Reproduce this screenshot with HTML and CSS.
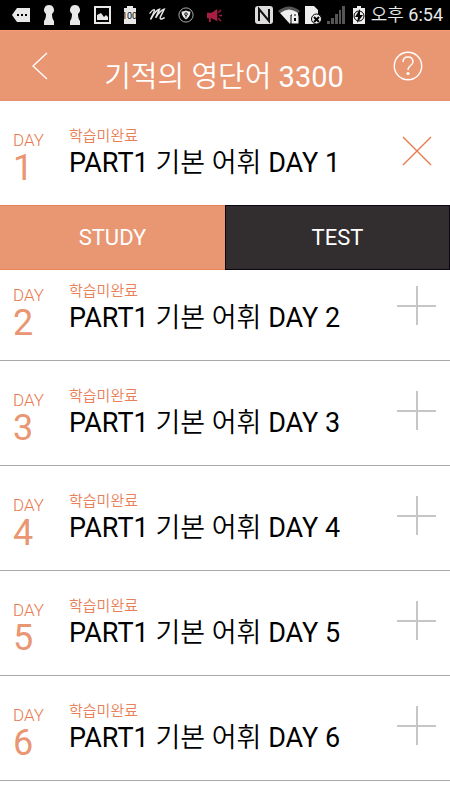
FILE: index.html
```html
<!DOCTYPE html>
<html lang="ko">
<head>
    <meta charset="UTF-8">
    <meta name="viewport" content="width=device-width, initial-scale=1.0">
    <title>기적의 영단어 3300</title>
    <link rel="stylesheet" href="styles.css">
</head>
<body>
    <!-- 상태 표시줄 -->
    <div class="status-bar">
        <div class="status-left">
            <svg width="18" height="16" viewBox="0 0 18 16"><path fill="#e8e8e8" d="M5 1h13v14H5L0 8z"/><path fill="#000" d="M5 7h2v2H5zM9 7h2v2H9zM13 7h2v2h-2z"/></svg>
            <svg width="14" height="20" viewBox="0 0 14 20"><path fill="#e8e8e8" d="M7 0a5 5 0 0 1 3 9q0 5 2 7v4H2v-4q2-2 2-7A5 5 0 0 1 7 0z"/></svg>
            <svg width="14" height="20" viewBox="0 0 14 20"><path fill="#e8e8e8" d="M7 0a5 5 0 0 1 3 9q0 5 2 7v4H2v-4q2-2 2-7A5 5 0 0 1 7 0z"/></svg>
            <svg width="17" height="18" viewBox="0 0 17 18"><path fill="none" stroke="#e8e8e8" stroke-width="2" d="M1 1h15v16H1z"/><path fill="#e8e8e8" d="M3 14V9l4-2 3 4 2-2 2 2v3z"/></svg>
            <span class="battery-level">
                <svg width="14" height="18" viewBox="0 0 14 18"><path fill="#e8e8e8" d="M4 0h6v2h3v16H1V2h3z"/></svg>
                <span class="battery-text">100</span>
            </span>
            <svg width="17" height="16" viewBox="0 0 18 16"><path fill="none" stroke="#e8e8e8" stroke-width="1.4" stroke-linecap="round" d="M1 6Q5 1 6 3L2 12"/><path fill="none" stroke="#e8e8e8" stroke-width="1.6" stroke-linecap="round" d="M2 12Q7 3 11 2L7 11Q12 3 16 2L12 10Q11 14 16 11"/></svg>
            <svg width="16" height="16" viewBox="0 0 18 18"><circle cx="9" cy="9" r="8" fill="none" stroke="#bbb"/><path fill="#e8e8e8" d="M9 4q2 1 5 1 0 6-5 9-5-3-5-9 3 0 5-1z"/><circle cx="9" cy="8" r="1.5" fill="none" stroke="#000"/><path stroke="#000" d="M9 9v3"/></svg>
            <svg width="17" height="15" viewBox="0 0 18 16"><path fill="#a81d43" d="M1 5h5l6-4v13l-6-3H5v4H3v-4H1z"/><path stroke="#a81d43" stroke-width="1.5" d="M13 5l3-3M14 8h3M13 11l3 3"/></svg>
        </div>
        <div class="status-right">
            <svg width="18" height="18" viewBox="0 0 18 18"><rect width="18" height="18" rx="3" fill="#ddd"/><path fill="none" stroke="#111" stroke-width="2" d="M4 15V3l10 12V3"/><path stroke="#ddd" d="M6 2l7 9M5 7l7 9"/></svg>
            <svg width="22" height="18" viewBox="0 0 22 18"><path fill="#555" d="M0 5q11-9 22 0l-2 2Q11 1 2 7z"/><path fill="#eee" d="M2 7q9-7 18 0l-8 11z"/><path fill="#eee" stroke="#000" d="M13 9h8v9h-8z"/><path fill="none" stroke="#eee" stroke-width="2" d="M15 10V8q2-3 4 0v2"/><path stroke="#000" stroke-width="2" d="M17 12v3"/></svg>
            <svg width="17" height="18" viewBox="0 0 17 18"><path fill="#eee" d="M0 0h9l4 4v14H0z"/><circle cx="11.5" cy="13" r="5" fill="#eee" stroke="#000"/><path stroke="#000" stroke-width="2" d="M9 11l5 5M14 11l-5 5"/></svg>
            <svg width="18" height="18" viewBox="0 0 18 18"><path fill="#555" d="M0 15h3v3H0zM4 12h3v6H4zM8 8h3v10H8zM12 4h2v14h-2zM15 0h3v18h-3z"/></svg>
            <svg width="16" height="18" viewBox="0 0 16 18"><path fill="#eee" d="M7 0h4v2h4v16H3V2h4z"/><circle cx="9" cy="10" r="5" fill="none" stroke="#000"/><path fill="#000" d="M10 3l-5 8h3l-1 6 6-8h-3z"/></svg>
            <span class="clock">오후 6:54</span>
        </div>
    </div>

    <!-- 상단 제목 -->
    <header class="header">
        <button class="icon-button back" type="button" aria-label="뒤로">
            <svg width="16" height="28" viewBox="0 0 16 28"><path fill="none" stroke="#fff" stroke-width="1.4" d="M15 1L1 14l14 13"/></svg>
        </button>
        <h1 class="title">기적의 영단어 3300</h1>
        <button class="icon-button" type="button" aria-label="도움말">
            <svg width="30" height="30" viewBox="0 0 30 30"><g fill="none" stroke="#fff" stroke-width="1.4"><circle cx="15" cy="15" r="13.7"/><path d="M10 11q0-5 5-5t5 5q0 2-3 4-2 2-2 4"/></g><circle cx="15" cy="22.500" r="1.600" fill="#fff"/></svg>
        </button>
    </header>

    <!-- 학습 목록 -->
    <main class="day-list">
        <section class="day-row open">
            <div class="day"><span class="day-label">DAY</span><span class="day-number">1</span></div>
            <div class="info"><span class="state">학습미완료</span><h2 class="name">PART1 기본 어휘 DAY 1</h2></div>
            <button class="toggle" type="button" aria-label="닫기"><svg width="40" height="40" viewBox="0 0 40 40"><path stroke="#e8794f" stroke-width="1.4" d="M6 6l28 28M34 6L6 34"/></svg></button>
        </section>
        <div class="actions">
            <button class="study" type="button">STUDY</button>
            <button class="test" type="button">TEST</button>
        </div>
        <section class="day-row">
            <div class="day"><span class="day-label">DAY</span><span class="day-number">2</span></div>
            <div class="info"><span class="state">학습미완료</span><h2 class="name">PART1 기본 어휘 DAY 2</h2></div>
            <button class="toggle" type="button" aria-label="열기"><svg width="40" height="40" viewBox="0 0 40 40"><path fill="#c6c6c6" d="M19 0h2v39h-2zM0 19h39v2H0z"/></svg></button>
        </section>
        <section class="day-row">
            <div class="day"><span class="day-label">DAY</span><span class="day-number">3</span></div>
            <div class="info"><span class="state">학습미완료</span><h2 class="name">PART1 기본 어휘 DAY 3</h2></div>
            <button class="toggle" type="button" aria-label="열기"><svg width="40" height="40" viewBox="0 0 40 40"><path fill="#c6c6c6" d="M19 0h2v39h-2zM0 19h39v2H0z"/></svg></button>
        </section>
        <section class="day-row">
            <div class="day"><span class="day-label">DAY</span><span class="day-number">4</span></div>
            <div class="info"><span class="state">학습미완료</span><h2 class="name">PART1 기본 어휘 DAY 4</h2></div>
            <button class="toggle" type="button" aria-label="열기"><svg width="40" height="40" viewBox="0 0 40 40"><path fill="#c6c6c6" d="M19 0h2v39h-2zM0 19h39v2H0z"/></svg></button>
        </section>
        <section class="day-row">
            <div class="day"><span class="day-label">DAY</span><span class="day-number">5</span></div>
            <div class="info"><span class="state">학습미완료</span><h2 class="name">PART1 기본 어휘 DAY 5</h2></div>
            <button class="toggle" type="button" aria-label="열기"><svg width="40" height="40" viewBox="0 0 40 40"><path fill="#c6c6c6" d="M19 0h2v39h-2zM0 19h39v2H0z"/></svg></button>
        </section>
        <section class="day-row">
            <div class="day"><span class="day-label">DAY</span><span class="day-number">6</span></div>
            <div class="info"><span class="state">학습미완료</span><h2 class="name">PART1 기본 어휘 DAY 6</h2></div>
            <button class="toggle" type="button" aria-label="열기"><svg width="40" height="40" viewBox="0 0 40 40"><path fill="#c6c6c6" d="M19 0h2v39h-2zM0 19h39v2H0z"/></svg></button>
        </section>
    </main>
</body>
</html>
```
FILE: styles.css
```css
/* 기본 스타일 */
* {
    box-sizing: border-box;
}
body {
    margin: 0;
    background: #fff;
    color: #000;
    font-family: Roboto, "Noto Sans CJK KR DemiLight", "Noto Sans CJK KR", sans-serif;
}
button {
    padding: 0;
    border: 0;
    background: none;
    font-family: inherit;
    cursor: pointer;
}
svg {
    display: block;
    flex: none;
}
/* 상태 표시줄 */
.status-bar {
    display: flex;
    justify-content: space-between;
    align-items: center;
    height: 30px;
    padding: 0 7px 0 12px;
    background: #000;
    color: #e8e8e8;
}
.status-left {
    display: flex;
    align-items: center;
    gap: 12px;
}
.status-right {
    display: flex;
    align-items: center;
    gap: 5px;
}
.battery-level {
    position: relative;
}
.battery-text {
    position: absolute;
    top: 4px;
    left: -1px;
    color: #000;
    font-size: 9px;
    line-height: 12px;
}
.clock {
    font-size: 18px;
    line-height: 30px;
    white-space: nowrap;
}
/* 상단 제목 */
.header {
    display: flex;
    justify-content: space-between;
    height: 71px;
    padding: 0 27px 0 25px;
    border-top: 1px solid #fb9b76;
    border-bottom: 1px solid #e88e68;
    background: #e99673;
    color: #fff;
}
.icon-button {
    display: flex;
    justify-content: center;
    align-items: center;
    width: 30px;
}
.title {
    margin: 0;
    padding-top: 11px;
    font-size: 29px;
    font-weight: 400;
    line-height: 70px;
}
/* 학습 목록 */
.day-row {
    display: flex;
    align-items: flex-start;
    height: 105px;
    padding: 26px 13px 0;
    border-bottom: 1px solid #aaa;
}
.day-row.open {
    height: 104px;
    border-bottom: 0;
}
.day {
    display: flex;
    flex-direction: column;
    width: 56px;
    padding-top: 3px;
    color: #e99673;
}
.day-label {
    color: #e8794f;
    font-size: 17px;
    font-weight: 300;
    line-height: 20px;
}
.day-number {
    font-size: 36px;
    line-height: 36px;
}
.info {
    flex: 1;
}
.state {
    display: block;
    color: #e88058;
    font-size: 15px;
    font-weight: 300;
    line-height: 18px;
}
.name {
    margin: 0;
    font-size: 27px;
    font-weight: 400;
    line-height: 36px;
}
.toggle {
    padding-top: 4px;
}
/* 학습 / 시험 버튼, 다음 항목 위에 겹침 */
.actions {
    position: relative;
    display: flex;
    height: 65px;
    margin-bottom: -14px;
}
.study,
.test {
    width: 50%;
    color: #fff;
    font-size: 22px;
}
.study {
    border-top: 1px solid #e88058;
    border-bottom: 1px solid #e88058;
    background: #e99673;
}
.test {
    border: 1px solid #0b0514;
    background: #322d2e;
}
```
